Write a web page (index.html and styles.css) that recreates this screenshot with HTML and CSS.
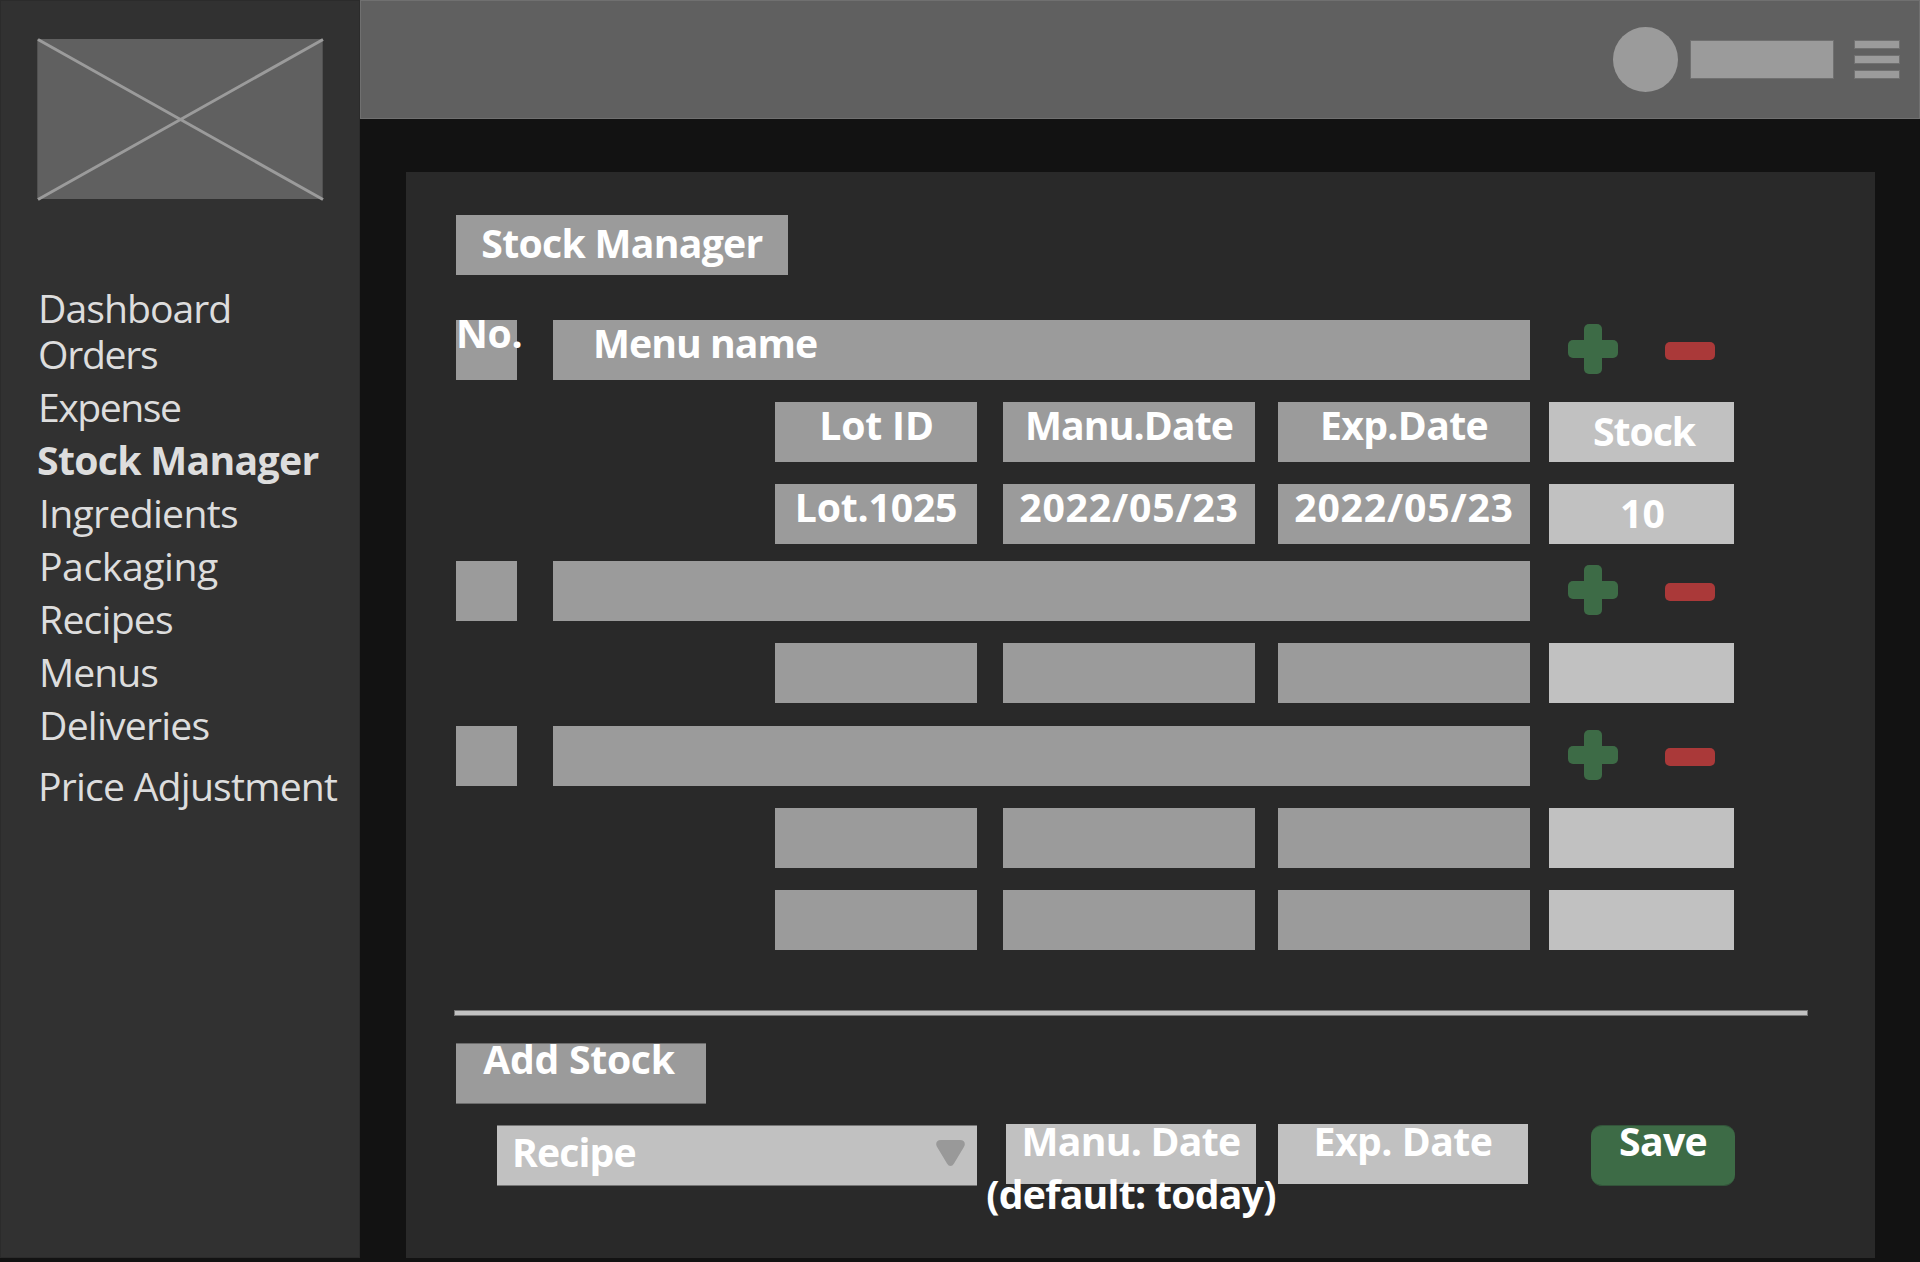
FILE: index.html
```html
<!DOCTYPE html>
<html lang="en">
<head>
<meta charset="utf-8">
<title>Stock Manager</title>
<link rel="stylesheet" href="styles.css">
</head>
<body>
<div class="app">
  <aside class="sidebar">
    <svg class="logo" width="288" height="164" viewBox="0 0 288 164">
      <rect x="1.3" y="2" width="285.4" height="160" fill="#606060"/>
      <path d="M2 2.5 287 162.5M287 2.5 2 162.5" stroke="#9b9b9b" stroke-width="3"/>
    </svg>
    <nav class="nav">
      <a class="nav-item dashboard">Dashboard</a>
      <a class="nav-item orders">Orders</a>
      <a class="nav-item expense">Expense</a>
      <a class="nav-item active">Stock Manager</a>
      <a class="nav-item inset ingredients">Ingredients</a>
      <a class="nav-item inset packaging">Packaging</a>
      <a class="nav-item inset">Recipes</a>
      <a class="nav-item inset menus">Menus</a>
      <a class="nav-item inset">Deliveries</a>
      <a class="nav-item price">Price Adjustment</a>
    </nav>
  </aside>
  <div class="main">
    <header class="topbar">
      <div class="avatar"></div>
      <div class="username"></div>
      <div class="burger"><i></i><i></i><i></i></div>
    </header>
    <main class="panel">
      <h1 class="box title"><span>Stock Manager</span></h1>

      <section class="group">
        <div class="menu-row">
          <div class="box number"><span>No.</span></div>
          <div class="box menu"><span>Menu name</span></div>
          <svg class="plus" width="50" height="50" viewBox="0 0 50 50"><rect x="16" width="18" height="50" rx="5"/><rect y="16" width="50" height="18" rx="5"/></svg>
          <div class="minus"></div>
        </div>
        <div class="lot-row">
          <div class="box"><span class="t-id">Lot ID</span></div>
          <div class="box"><span class="t-manu">Manu.Date</span></div>
          <div class="box"><span class="t-exp">Exp.Date</span></div>
          <div class="box light stock"><span class="t-stock">Stock</span></div>
        </div>
        <div class="lot-row">
          <div class="box"><span class="t-lot">Lot.1025</span></div>
          <div class="box"><span class="t-date">2022/05/23</span></div>
          <div class="box"><span class="t-date">2022/05/23</span></div>
          <div class="box light stock"><span class="t-qty">10</span></div>
        </div>
      </section>

      <section class="group second">
        <div class="menu-row">
          <div class="box number"></div>
          <div class="box menu"></div>
          <svg class="plus" width="50" height="50" viewBox="0 0 50 50"><rect x="16" width="18" height="50" rx="5"/><rect y="16" width="50" height="18" rx="5"/></svg>
          <div class="minus"></div>
        </div>
        <div class="lot-row">
          <div class="box"></div><div class="box"></div><div class="box"></div><div class="box light"></div>
        </div>
      </section>

      <section class="group third">
        <div class="menu-row">
          <div class="box number"></div>
          <div class="box menu"></div>
          <svg class="plus" width="50" height="50" viewBox="0 0 50 50"><rect x="16" width="18" height="50" rx="5"/><rect y="16" width="50" height="18" rx="5"/></svg>
          <div class="minus"></div>
        </div>
        <div class="lot-row">
          <div class="box"></div><div class="box"></div><div class="box"></div><div class="box light"></div>
        </div>
        <div class="lot-row">
          <div class="box"></div><div class="box"></div><div class="box"></div><div class="box light"></div>
        </div>
      </section>

      <div class="divider"></div>

      <h2 class="box add-title"><span>Add Stock</span></h2>
      <form class="add-row">
        <div class="box light recipe">
          <span>Recipe</span>
          <svg width="29" height="26" viewBox="0 0 29 26"><path d="M5 0H24Q29 0 28.8 4.5Q28.6 6 27.6 7.5L18 23.5Q16.5 26 14.5 26Q12.5 26 11 23.5L1.4 7.5Q.4 6 .2 4.5Q0 0 5 0Z" fill="#999"/></svg>
        </div>
        <div class="box light date"><span class="t-manu2">Manu. Date<br>(default: today)</span></div>
        <div class="box light date exp"><span>Exp. Date</span></div>
        <div class="box save"><span>Save</span></div>
      </form>
    </main>
  </div>
</div>
</body>
</html>
```
FILE: styles.css
```css
* { box-sizing: border-box; }

body {
  margin: 0;
  background: #121212;
  font: 39.2px/53px "Open Sans", "Noto Sans", sans-serif;
}

.app {
  display: flex;
  width: 1920px;
  height: 1262px;
  padding-bottom: 4px;
  overflow: hidden;
}

/* Sidebar */
.sidebar {
  width: 360px;
  padding-top: 36px;
  background: #313131;
  border: 1px solid #2b2b2b;
}
.logo { display: block; margin-left: 35px; }
.nav {
  display: flex;
  flex-direction: column;
  margin: 80px 0 0 37px;
  color: #ddd;
}
.nav-item { height: 53px; white-space: nowrap; letter-spacing: -0.8px; }
.dashboard { height: 46px; letter-spacing: -1px; }
.orders { letter-spacing: -1.3px; }
.expense { letter-spacing: -1.5px; }
.active { margin-left: -1px; font-weight: 700; letter-spacing: -0.7px; }
.inset { padding-left: 1px; }
.ingredients { letter-spacing: -0.72px; }
.packaging { letter-spacing: -0.45px; }
.menus { letter-spacing: -1px; }
.price { margin-top: 8px; }

/* Top bar */
.main { flex: 1; }
.topbar {
  display: flex;
  justify-content: flex-end;
  align-items: center;
  height: 119px;
  padding-right: 19px;
  background: #606060;
  border: 1px solid #707070;
}
.avatar { width: 65px; height: 65px; border-radius: 50%; background: #9b9b9b; }
.username {
  width: 144px;
  height: 39px;
  margin: 0 20px 0 12px;
  background: #9b9b9b;
  border: 1px solid #707070;
}
.burger { display: flex; flex-direction: column; gap: 6px; }
.burger i { width: 46px; height: 9px; background: #9b9b9b; border: 1px solid #707070; }

/* Panel */
.panel {
  width: 1469px;
  height: 1086px;
  margin: 53px 0 0 46px;
  padding: 43px 0 0 50px;
  background: #292929;
}
.box {
  display: flex;
  justify-content: center;
  height: 60px;
  margin: 0;
  background: #9b9b9b;
  color: #fff;
  font-size: 39.2px;
  font-weight: 700;
  text-align: center;
  white-space: nowrap;
}
.light { background: #c1c1c1; }
.title { width: 332px; padding-top: 1px; letter-spacing: -0.72px; }

.group { display: flex; flex-direction: column; gap: 22px; margin-top: 45px; }
.group.second { margin-top: 17px; }
.group.third { margin-top: 23px; }

.menu-row { display: flex; }
.number { width: 61px; margin-right: 36px; justify-content: flex-start; }
.number span { margin-top: -14px; letter-spacing: -0.3px; }
.menu { width: 977px; padding-left: 40px; justify-content: flex-start; letter-spacing: -0.95px; }
.menu span { margin-top: -4px; }
.plus { margin: 4px 47px 0 38px; fill: #3d6b46; }
.minus { width: 50px; height: 18px; margin-top: 22px; border-radius: 5px; background: #aa3939; }

.lot-row {
  display: grid;
  grid-template-columns: 202px 252px 252px 185px;
  column-gap: 26px;
  margin-left: 319px;
}
.lot-row .box:nth-child(3) { margin: 0 4px 0 -3px; width: 252px; }
.lot-row .box:nth-child(4) { margin-left: -10px; width: 185px; }
.lot-row span { margin-top: -4px; }
.lot-row .stock span { margin-top: 2px; }
.t-id { padding-left: 1px; letter-spacing: -0.2px; }
.t-manu { letter-spacing: -0.9px; }
.t-exp { letter-spacing: -0.65px; }
.t-stock { padding-left: 5px; letter-spacing: -1.05px; }
.t-lot { letter-spacing: -0.2px; }
.t-date { letter-spacing: 0.8px; }
.t-qty { padding-left: 2px; }

.divider {
  width: 1354px;
  height: 6px;
  margin: 60px 0 0 -2px;
  background: #c1c1c1;
  border: 1px solid #767676;
}

/* Add stock */
.add-title {
  width: 250px;
  height: 61px;
  margin-top: 27px;
  padding-right: 4px;
  border: solid #6c6c6c;
  border-width: 1px 0;
  letter-spacing: -0.3px;
}
.add-title span { margin-top: -12px; }
.add-row { display: flex; margin: 20px 0 0 41px; }
.recipe {
  width: 480px;
  height: 61px;
  margin: 1px 29px 0 0;
  padding: 0 12px 0 15px;
  border: solid #767676;
  border-width: 1px 0;
  justify-content: space-between;
  letter-spacing: -0.91px;
}
.recipe span { margin-top: -1px; }
.recipe svg { margin-top: 14px; }
.date { width: 250px; letter-spacing: -0.52px; }
.date span { margin-top: -10px; }
.date .t-manu2 { margin-left: -20px; margin-right: -20px; letter-spacing: -0.75px; }
.exp { margin: 0 63px 0 22px; }
.save {
  width: 144px;
  height: 61px;
  margin-top: 1px;
  border: solid #33543a;
  border-width: 1px 0;
  border-radius: 11px;
  background: #3d6b46;
  letter-spacing: -0.7px;
}
.save span { margin-top: -12px; }
```
